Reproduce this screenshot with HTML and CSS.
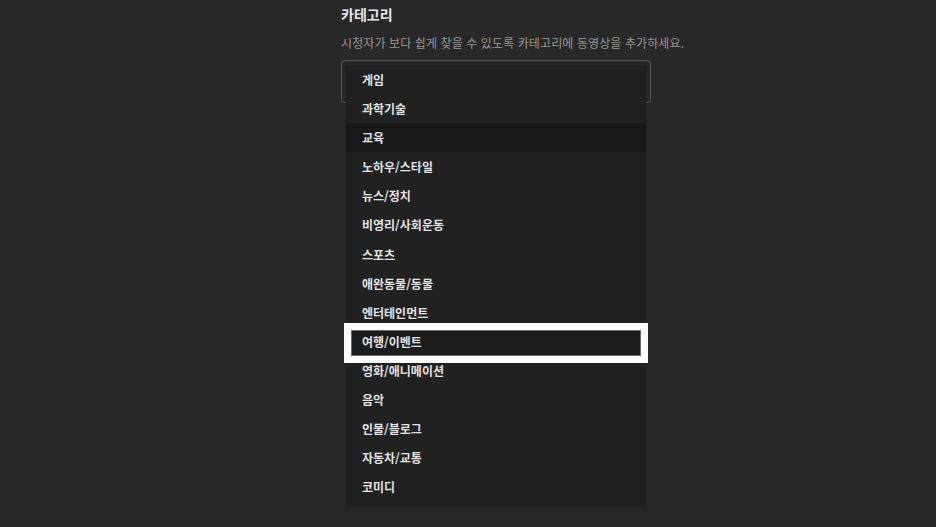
FILE: index.html
```html
<!DOCTYPE html>
<html lang="ko">
<head>
<meta charset="UTF-8">
<meta name="viewport" content="width=device-width, initial-scale=1.0">
<title>카테고리</title>
<link rel="stylesheet" href="styles.css">
</head>
<body>

<div class="panel">
  <h2 class="panel-title">카테고리</h2>
  <p class="panel-desc">시청자가 보다 쉽게 찾을 수 있도록 카테고리에 동영상을 추가하세요.</p>

  <div class="select">
    <ul class="menu">
      <li>게임</li>
      <li>과학기술</li>
      <li class="hover">교육</li>
      <li>노하우/스타일</li>
      <li>뉴스/정치</li>
      <li>비영리/사회운동</li>
      <li>스포츠</li>
      <li>애완동물/동물</li>
      <li>엔터테인먼트</li>
      <li class="focused">여행/이벤트</li>
      <li>영화/애니메이션</li>
      <li>음악</li>
      <li>인물/블로그</li>
      <li>자동차/교통</li>
      <li>코미디</li>
    </ul>
  </div>
</div>

</body>
</html>
```

FILE: styles.css
```css
html, body { height: 100%; }

body {
  margin: 0;
  padding: 0;
  min-height: 527px;
  background: #282828;
  color: #e6e6e6;
  font-family: "Noto Sans CJK KR", "Noto Sans", sans-serif;
}

.panel {
  width: 420px;
  min-height: 520px;
  margin-left: 341px;
  padding-top: 4px;
}

.panel-title {
  margin: 0;
  font-size: 14px;
  font-weight: bold;
  line-height: 20px;
  color: #e8e8e8;
}

.panel-desc {
  margin: 10px 0 0;
  font-size: 12px;
  line-height: 18px;
  letter-spacing: 0.1px;
  color: #979797;
}

/* select box with open menu */
.select {
  position: relative;
  width: 308px;
  margin-top: 8px;
  height: 41px;
  border: 1px solid #555;
  border-radius: 4px;
}

.menu {
  position: absolute;
  top: 4px;
  left: 4px;
  width: 300px;
  margin: 0;
  padding: 0 0 4px;
  list-style: none;
  background: #212121;
  box-shadow: 0 1px 3px rgba(0,0,0,0.3);
}

.menu li {
  position: relative;
  height: 29.1px;
  line-height: 29.5px;
  padding-left: 16px;
  font-size: 12px;
  font-weight: bold;
  color: #e2e2e2;
}

.menu li.hover { background: #181818; }

.menu li.focused { z-index: 1; }

.menu li.focused::before {
  content: "";
  position: absolute;
  top: 3px;
  bottom: 0;
  left: 5px;
  right: 5px;
  background: #1c1c1c;
  z-index: -1;
}

.menu li.focused::after {
  content: "";
  position: absolute;
  top: 3px;
  bottom: 0;
  left: 5px;
  right: 5px;
  border: 1px solid #6a6a6a;
  box-shadow: 0 0 0 7px #fff;
}
```
